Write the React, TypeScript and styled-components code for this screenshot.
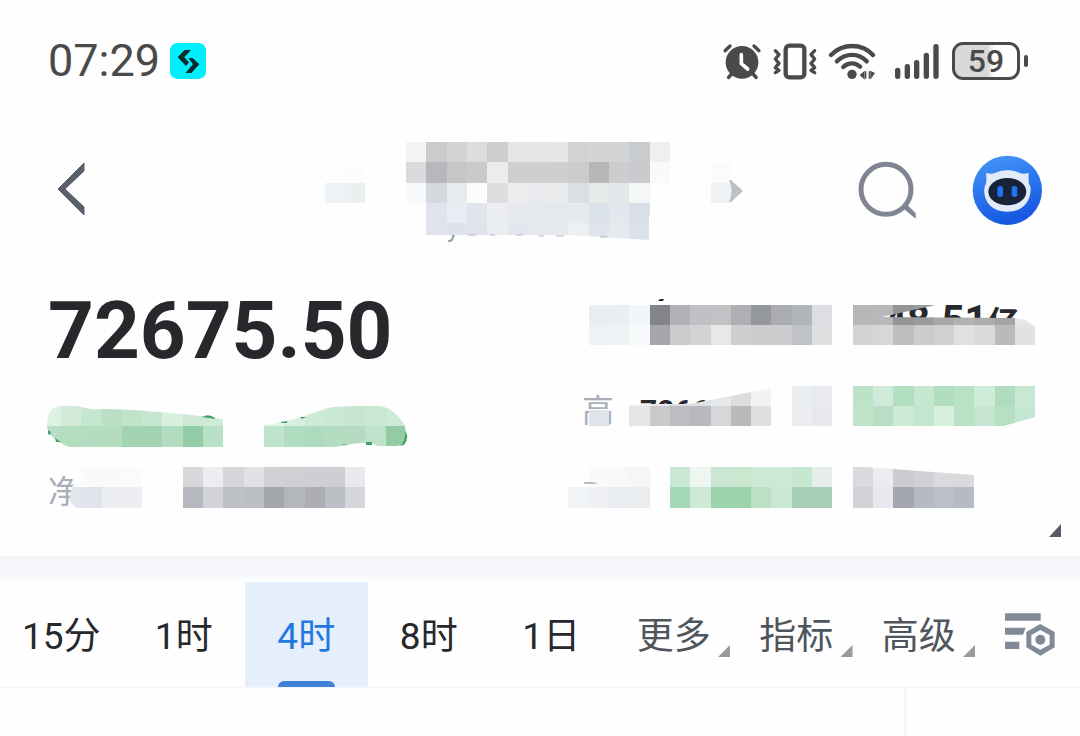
import React from "react";
import styled, { createGlobalStyle } from "styled-components";

const GlobalStyle = createGlobalStyle`
  * { box-sizing: border-box; }
  body {
    margin: 0;
    background: #fefefe;
    color: #26282c;
    font-family: Roboto, "Noto Sans CJK SC", sans-serif;
  }
  button {
    margin: 0;
    padding: 0;
    border: 0;
    background: none;
    color: inherit;
    font: inherit;
    cursor: pointer;
  }
  svg { display: block; }
`;

const Page = styled.main`
  display: flex;
  flex-direction: column;
  min-height: 100vh;
`;

/* ---------- status bar ---------- */

const StatusBar = styled.div`
  display: flex;
  align-items: center;
  justify-content: space-between;
  height: 124px;
  padding: 0 52px 2px 48px;
  color: #4a4a4a;
`;

const StatusGroup = styled.div`
  display: flex;
  align-items: center;
  gap: 10px;
`;

const Clock = styled.time`
  font-size: 45px;
  line-height: 48px;
`;

const Battery = styled.div`
  display: flex;
  align-items: center;
  gap: 4px;
  &::after {
    content: "";
    width: 4px;
    height: 12px;
    border-radius: 2px;
    background: #4a4a4a;
  }
`;

const BatteryBody = styled.span`
  display: flex;
  align-items: center;
  justify-content: center;
  width: 68px;
  height: 38px;
  border: 3px solid #4a4a4a;
  border-radius: 11px;
  background: linear-gradient(90deg, #d8d8d8 52%, #fefefe 64%);
  font-size: 32px;
  font-weight: 500;
  line-height: 32px;
`;

/* ---------- header ---------- */

const Header = styled.header`
  display: grid;
  grid-template-columns: 1fr auto 1fr;
  align-items: center;
  height: 132px;
  padding: 0 38px;
`;

const HeaderSide = styled.div<{ $end?: boolean }>`
  display: flex;
  gap: 54px;
  padding-left: ${(p) => (p.$end ? 0 : 16)}px;
  justify-content: ${(p) => (p.$end ? "flex-end" : "flex-start")};
`;

const Title = styled.div`
  position: relative;
  display: flex;
  flex-direction: column;
  justify-content: flex-end;
  width: 430px;
  height: 96px;
  padding-left: 122px;
  color: #9a9fa8;
  font-size: 26px;
  line-height: 20px;
`;

/* ---------- quote ---------- */

const Quote = styled.section`
  position: relative;
  display: grid;
  grid-template-columns: 527fr 467fr;
  height: 300px;
  padding: 35px 45px 0 41px;
`;

const QuoteColumn = styled.div<{ $gap: number; $top?: number }>`
  display: flex;
  flex-direction: column;
  gap: ${(p) => p.$gap}px;
  padding-top: ${(p) => p.$top ?? 0}px;
`;

const Price = styled.h1`
  margin: 0;
  padding: 0 0 15px 7px;
  font-size: 80px;
  font-weight: 700;
  line-height: 80px;
`;

const Line = styled.div<{ $align?: string }>`
  position: relative;
  display: flex;
  align-items: ${(p) => p.$align ?? "flex-end"};
  height: 41px;
  line-height: 32px;
`;

const Label = styled.span<{ $inset: number }>`
  padding-left: ${(p) => p.$inset}px;
  color: #a9aeb8;
  font-size: 32px;
`;

const Value = styled.strong<{ $inset: number; $large?: boolean }>`
  padding-left: ${(p) => p.$inset}px;
  font-size: ${(p) => (p.$large ? 40 : 30)}px;
  font-weight: 700;
`;

const Unit = styled.span`
  font-size: 32px;
`;

const Overlay = styled.svg`
  position: absolute;
  top: 0;
  left: 0;
  overflow: visible;
`;

const Expand = styled.button`
  position: absolute;
  right: 19px;
  bottom: 19px;
  width: 12px;
  height: 13px;
  background: #565b66;
  clip-path: polygon(100% 0, 100% 100%, 0 100%);
`;

const Band = styled.div`
  height: 24px;
  background: linear-gradient(#f5f6f9 75%, #fbfcfd);
`;

/* ---------- tabs ---------- */

const Tabs = styled.nav`
  display: grid;
  grid-template-columns: repeat(8, 49fr) 40fr;
  height: 108px;
  border-bottom: 1px solid #f4f5f6;
`;

const Tab = styled.button<{ $active?: boolean; $menu?: boolean }>`
  position: relative;
  margin-top: 2px;
  padding-top: 4px;
  background: ${(p) => (p.$active ? "#e6effc" : "transparent")};
  color: ${(p) => (p.$active ? "#2377e0" : p.$menu ? "#50555c" : "#26282c")};
  font-size: 37px;
  line-height: 56px;
  &::after {
    content: "";
    position: absolute;
    ${(p) =>
      p.$active
        ? "left: 33px; right: 33px; bottom: 0; height: 6px; border-radius: 6px 6px 0 0; background: #3f82d8;"
        : p.$menu
          ? "right: 5px; bottom: 30px; width: 12px; height: 12px; background: #999a9c; clip-path: polygon(100% 0, 100% 100%, 0 100%);"
          : "display: none;"}
  }
`;

const IconTab = styled.button`
  display: flex;
  align-items: center;
  justify-content: center;
`;

const Chart = styled.section`
  display: grid;
  grid-template-columns: 904fr 176fr;
  flex: 1;
  min-height: 48px;
`;

const PriceAxis = styled.div`
  border-left: 2px solid #f4f5f7;
`;

/* ---------- mosaic ---------- */

const CELL = 20.3;

type Run = { col: number; row: number; colors: string };

function Mosaic(props: {
  id: string;
  col: number;
  row: number;
  cols: number;
  rows: number;
  runs: Run[];
  clip: string;
  children?: React.ReactNode;
}) {
  const { id, col, row, cols, rows, runs, clip, children } = props;
  const w = Math.round(cols * CELL);
  const h = Math.round(rows * CELL);
  return (
    <Overlay
      aria-hidden="true"
      width={w}
      height={h}
      viewBox={`${Math.round(col * CELL)} ${Math.round(row * CELL)} ${w} ${h}`}
    >
      <clipPath id={id}>
        <path d={clip} />
      </clipPath>
      <g clipPath={`url(#${id})`} shapeRendering="crispEdges">
        {runs.flatMap((run) =>
          run.colors.split(" ").map((c, i) => (
            <rect
              key={`${run.row}-${run.col + i}`}
              x={(run.col + i) * CELL}
              y={run.row * CELL}
              width={CELL}
              height={CELL}
              fill={`#${c}`}
            />
          ))
        )}
      </g>
      {children}
    </Overlay>
  );
}

/* ---------- icons ---------- */

const AppBadge = () => (
  <svg width="36" height="36" viewBox="420 39 108 108">
    <rect x="420" y="39" width="108" height="108" rx="22" fill="#00effc" />
    <path d="M464 60h19L463 82l14 15-9 11-25-26z" fill="#0b2a30" />
    <path d="M475 84h13l20 19-24 26h-18l23-26z" fill="#0b2a30" />
  </svg>
);

const AlarmIcon = () => (
  <svg width="40" height="38" viewBox="36 33 120 114" fill="none" stroke="#4a4a4a" strokeLinecap="round">
    <circle cx="96" cy="94" r="49" fill="#4a4a4a" stroke="none" />
    <path d="M45 59l15-14M132 45l15 14" strokeWidth="10" />
    <path d="M56 139l12-14M138 139l-12-14" strokeWidth="11" />
    <path d="M94 71v27l19 16" stroke="#fefefe" strokeWidth="11" strokeLinejoin="round" />
  </svg>
);

const VibrateIcon = () => (
  <svg width="46" height="38" viewBox="186 33 138 114" fill="none" stroke="#4a4a4a" strokeLinecap="round" strokeLinejoin="round">
    <rect x="227" y="44" width="56" height="95" rx="11" strokeWidth="13" />
    <path d="M196 59l11 12-11 13 11 13-11 13 11 8-11 7M314 59l-11 12 11 13-11 13 11 13-11 8 11 7" strokeWidth="10" />
  </svg>
);

const WifiIcon = () => (
  <svg width="48" height="38" viewBox="354 33 144 114" fill="none" stroke="#4a4a4a" strokeWidth="13" strokeLinecap="round">
    <path d="M363 72C398 36 456 36 489 72M381 91C406 65 446 65 470 91M400 108C415 94 436 94 450 107" />
    <circle cx="426" cy="130" r="14" fill="#4a4a4a" stroke="none" />
    <path d="M464 119v27l-15-14zM481 119v27l14-20z" fill="#4a4a4a" stroke="none" />
    <path d="M467 122v20M478 122v20" strokeWidth="4" />
  </svg>
);

const SignalIcon = () => (
  <svg width="56" height="38" viewBox="528 33 168 114" stroke="#4a4a4a" strokeWidth="16" strokeLinecap="round">
    <path d="M563 118v18M592 107v29M620 95v41M649 73v63M678 47v89" />
  </svg>
);

const BackIcon = () => (
  <svg width="34" height="56" viewBox="54 162 34 56">
    <path d="M84 163v8L65 189l19 18v8L58 189z" fill="#59606c" stroke="#59606c" strokeWidth="1" />
  </svg>
);

const SearchIcon = () => (
  <svg width="60" height="60" viewBox="54 60 180 180">
    <circle cx="138" cy="148" r="75" fill="none" stroke="#7f8593" strokeWidth="15" />
    <path d="M189 205l11-12 27 27v16z" fill="#7f8593" />
  </svg>
);

const AssistantIcon = () => (
  <svg width="70" height="70" viewBox="396 45 210 210">
    <defs>
      <linearGradient id="assistant" x1="0" y1="0" x2="0.3" y2="1">
        <stop offset="0" stopColor="#4a9af7" />
        <stop offset="0.5" stopColor="#2c78f0" />
        <stop offset="1" stopColor="#1759e0" />
      </linearGradient>
    </defs>
    <circle cx="502" cy="151" r="104" fill="url(#assistant)" />
    <path d="M438 99c10 2 18 3 25 1 24-12 54-12 78 0 8 2 16 1 25-1 0 10-1 21 1 32 6 9 6 18 4 27-4 31-26 57-69 57-44 0-65-24-69-55-1-10 0-20 5-30 2-10 1-21 0-31z" fill="#e3eafa" />
    <ellipse cx="502" cy="155" rx="57" ry="41" fill="#172338" />
    <rect x="472" y="138" width="17" height="33" rx="8" fill="#1d73f2" />
    <rect x="515" y="138" width="17" height="33" rx="8" fill="#1d73f2" />
  </svg>
);

const SettingsIcon = () => (
  <svg width="52" height="46" viewBox="1212 126 156 138">
    <path d="M1215 133h107v22H1215zM1215 176h62l-8 21h-54zM1215 218h43v22h-43z" fill="#7f8997" />
    <path
      fillRule="evenodd"
      d="M1321 165l43 24v46l-43 25-42-25v-46zM1321 183l-27 15v29l27 15 28-15v-29z"
      fill="#7f8997"
    />
    <circle cx="1321" cy="212" r="15" fill="#7f8997" />
  </svg>
);

/* ---------- page ---------- */

const periods = ["15分", "1时", "4时", "8时", "1日"];
const menus = ["更多", "指标", "高级"];

export default function App() {
  return (
    <Page>
      <GlobalStyle />
      <StatusBar>
        <StatusGroup>
          <Clock>07:29</Clock>
          <AppBadge />
        </StatusGroup>
        <StatusGroup>
          <AlarmIcon />
          <VibrateIcon />
          <WifiIcon />
          <SignalIcon />
          <Battery>
            <BatteryBody>59</BatteryBody>
          </Battery>
        </StatusGroup>
      </StatusBar>

      <Header>
        <HeaderSide>
          <button aria-label="返回">
            <BackIcon />
          </button>
        </HeaderSide>
        <Title>
          <span>y</span>
          <Mosaic
            id="title-clip"
            col={16}
            row={7}
            cols={21}
            rows={5}
            clip="M320 142H750V215H649V240L570 235H426V215H320z"
            runs={[
              { col: 20, row: 7, colors: "f3f4f4 cacbcd d2d3d5 dcdddf cdced0 e4e5e5 e4e5e5 e5e7e7 d1d2d3 d3d4d5 d3d4d5 c9cccf efefef" },
              { col: 17, row: 8, colors: "fcfcfc" },
              { col: 20, row: 8, colors: "d9dadb b6b8bb c5c6c8 c9cacc ececed cfcfd1 cfcfd1 cfcfd0 cbccce b5b7b8 cdcdcf c9cacd fafafa" },
              { col: 35, row: 8, colors: "fbfbfb" },
              { col: 16, row: 9, colors: "eff2f4 eceff0" },
              { col: 20, row: 9, colors: "f7f8f9 d5d8dc e8ebee fcfcfc dddcde ededf0 e8eaed e9ebed dbdfe3 e6e9ea e4e7ea f4f6f7" },
              { col: 35, row: 9, colors: "eff2f4" },
              { col: 21, row: 10, colors: "e0e4ec e9ecf2 e0e4eb eceef2 e6e9ee e5e8ec e5e9ee e6eaef dbe1e8 e4e8ee d9dfe9" },
              { col: 21, row: 11, colors: "dfe3ea dee2ea dfe4ec eaedf2 e3e7ed e5e9ed e5e8ed edeff2 dfe3ec e5eaef dbe1ea" },
            ]}
          >
            <path d="M729 180h2l12 11-12 11h-2q5-11 0-22z" fill="#bcc1c6" />
            <path d="M468 235h8M490 235h5M516 235h7M538 236h6M556 236h8M600 237h7" stroke="#b4b9c2" strokeWidth="1" />
          </Mosaic>
        </Title>
        <HeaderSide $end>
          <button aria-label="搜索">
            <SearchIcon />
          </button>
          <button aria-label="助手">
            <AssistantIcon />
          </button>
        </HeaderSide>
      </Header>

      <Quote>
        <QuoteColumn $gap={20}>
          <Price>72675.50</Price>
          <Line>
            <Mosaic
              id="change-clip"
              col={2}
              row={20}
              cols={19}
              rows={2}
              clip="M47 425C47 412 52 406 62 406H78C88 409 94 410 102 409C130 409 180 413 223 419V447H70C60 444 47 436 47 425zM264 425C290 422 310 414 325 409C335 406 345 406 380 406C392 408 398 416 404 424C408 436 406 446 396 446H378C366 438 345 447 330 447H264z"
              runs={[
                { col: 2, row: 20, colors: "ddf2e3 d2ebda c5e6cf b9e0c4 bfe4c9 c6e7cf d8efdf cbe9d4 cfebd8" },
                { col: 2, row: 21, colors: "b7dec3 b4dec0 b3dcc0 b4dcbe a3d4b2 a3d4b2 b3ddc0 94cca5 b8e0c5" },
                { col: 13, row: 20, colors: "e3f3e8 d8efdf cdead7 c9e8d3 c6e6d1 c8e8d1 cdead6" },
                { col: 13, row: 21, colors: "bfe3cb b0dcbf aedabd b4dcc1 b4dbc1 bfe3ca 93cba5" },
              ]}
            >
              <path
                d="M202 417q7-4 13 1v1zM48 430l3 2-1 3-2-1zM55 438l6 4h-5zM281 422l6-1v2h-6zM300 417h6l-4 2zM366 442h6v3h-6zM342 444h6l-4 1zM405 431q5 6-1 14l-4 1q6-5 5-15z"
                fill="#45a06a"
              />
            </Mosaic>
          </Line>
          <Line>
            <Label $inset={7}>净</Label>
            <Mosaic
              id="net-clip"
              col={2}
              row={23}
              cols={19}
              rows={2}
              clip="M75 467H142V508H76L69 500L72 486L86 480z M182 466H366V508H182z"
              runs={[
                { col: 3, row: 23, colors: "fbfbfb fafafa fafafa fbfbfb" },
                { col: 3, row: 24, colors: "e3e6ec e1e4ea eceef2 eceef2" },
                { col: 9, row: 23, colors: "d6d8dc ecedf0 d5d6da dfe1e4 cfd1d5 cfd0d4 cecfd4 cecfd3 e8e9ec" },
                { col: 9, row: 24, colors: "b5b8be d1d3d8 bdc0c5 bbbec3 a3a6ab b3b6bb acaeb4 bbbec4 d4d6da" },
              ]}
            />
          </Line>
        </QuoteColumn>

        <QuoteColumn $gap={40} $top={14}>
          <Line $align="flex-start">
            <Value $inset={316} $large>
              48.51<Unit>亿</Unit>
            </Value>
            <Mosaic
              id="volume-clip"
              col={28}
              row={15}
              cols={23}
              rows={2}
              clip="M568 304H833V346H568zM852 304H940L882 317L1015 318L1026 320L1035 327V346H852z"
              runs={[
                { col: 29, row: 15, colors: "e9edf0 eceff1 f3f6f8 838488 b1b2b5 bfc1c4 c0c2c4 adafb3 94979b aaacb0 b2b6bb dcdee2" },
                { col: 29, row: 16, colors: "eef2f5 f0f3f5 f6f8f9 a5a6a9 cacbcd d2d3d5 e7e8e8 cfcfd1 cdcdcf cdcdcf bfc2c6 dddfe1" },
                { col: 42, row: 15, colors: "b6b7b9 b7b8ba 949597 9b9c9e a8a9ab b0b1b2 abacae a2a4a6 e7e7e8" },
                { col: 42, row: 16, colors: "d2d3d5 d6d7d9 bdbec0 cbccce cfd0d1 e0e0e1 d9dadc b8babc e2e2e3" },
              ]}
            >
              <path d="M660 299h4l-1 2h-5z" fill="#26282c" />
            </Mosaic>
          </Line>
          <Line>
            <Label $inset={14}>高</Label>
            <Value $inset={26}>7266</Value>
            <Mosaic
              id="high-clip"
              col={28}
              row={19}
              cols={23}
              rows={2}
              clip="M589 410H609V427H589zM629 406L645 404L690 404L771 388V427H629zM791 385H833V427H791zM852 385H1036V417L1000 427H852z"
              runs={[
                { col: 29, row: 20, colors: "dfe4ea" },
                { col: 31, row: 19, colors: "f1f1f2 e6e7e8 dcdde0 e0e1e3 e6e7e9 dcdddd f2f2f2" },
                { col: 31, row: 20, colors: "e6e6e7 c9cacc bbbdc0 b7b9bc d6d7d9 b8babc dedfe0" },
                { col: 39, row: 19, colors: "ebeef0 e8eaee" },
                { col: 39, row: 20, colors: "eceef1 e7e8ec" },
                { col: 42, row: 19, colors: "bce2c7 cfeadb b2dfc0 c6e7d0 b2dec0 b8e1c6 cfecdb b0ddbe c8e8d3" },
                { col: 42, row: 20, colors: "bfe4ca b8dfc6 cbe9d3 c3e6cf d7efdd b9e1c6 c5e5d2 b6e0c2 c3e7d0" },
              ]}
            />
          </Line>
          <Line>
            <Mosaic
              id="low-clip"
              col={28}
              row={23}
              cols={23}
              rows={2}
              clip="M568 466H833V508H568zM852 466L974 475V508H852z"
              runs={[
                { col: 29, row: 23, colors: "f8f9fa f7f8f9 f5f6f7" },
                { col: 28, row: 24, colors: "f1f4f7 eef0f4 e9edf1 e9edf0" },
                { col: 33, row: 23, colors: "c9e9d5 eef6f1 c9e7d3 cae8d0 cde8d4 cbe9d6 c6e7d0 e6ecea" },
                { col: 33, row: 24, colors: "a5d8b7 cee9d6 9dd3aa 9dd3aa bbe1c5 cbe8d6 a7cfba a8d0b9" },
                { col: 42, row: 23, colors: "d9dadd ebecf0 cbccd0 cfd1d4 d8dadc d9dadc" },
                { col: 42, row: 24, colors: "d0d2d5 e6e8ed a4a7af b6bac5 bbbfc7 b6bac6" },
              ]}
            >
              <path d="M584 482h9l5 2h-14z" fill="#b9bdc0" />
            </Mosaic>
          </Line>
        </QuoteColumn>
        <Expand aria-label="展开" />
      </Quote>

      <Band />

      <Tabs>
        {periods.map((p) => (
          <Tab key={p} $active={p === "4时"}>
            {p}
          </Tab>
        ))}
        {menus.map((m) => (
          <Tab key={m} $menu>
            {m}
          </Tab>
        ))}
        <IconTab aria-label="设置">
          <SettingsIcon />
        </IconTab>
      </Tabs>

      <Chart>
        <div />
        <PriceAxis />
      </Chart>
    </Page>
  );
}
